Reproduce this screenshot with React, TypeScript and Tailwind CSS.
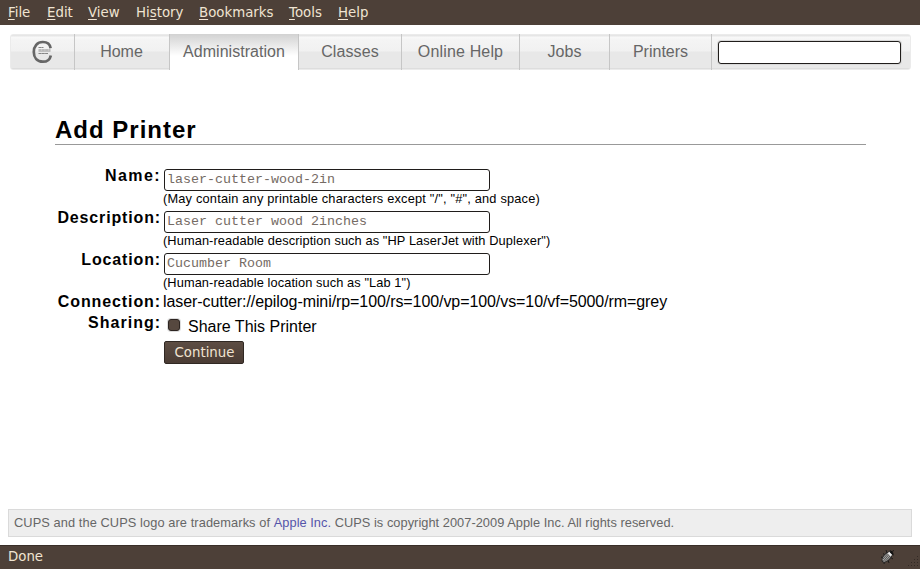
import type { ReactNode } from "react";

const sans = "font-['Liberation_Sans',Arial,sans-serif]";
const ui = "font-['DejaVu_Sans',sans-serif]";

const menus = [
  { label: "File", gap: "w-[39px]" },
  { label: "Edit", gap: "w-[41px]" },
  { label: "View", gap: "w-[48px]" },
  { label: "History", gap: "w-[63px]", key: 2 },
  { label: "Bookmarks", gap: "w-[90px]" },
  { label: "Tools", gap: "w-[49px]" },
  { label: "Help", gap: "" },
];

const tabs = [
  { label: "Home", width: "w-[95px]", text: "-ml-px" },
  { label: "Administration", width: "w-[129px]", text: "tracking-[0.04px]", active: true },
  { label: "Classes", width: "w-[103px]", text: "tracking-[0.12px]" },
  { label: "Online Help", width: "w-[118px]", text: "tracking-[0.16px]" },
  { label: "Jobs", width: "w-[90px]", text: "" },
  { label: "Printers", width: "w-[102px]", text: "" },
];

function MenuBar() {
  return (
    <header className={`flex h-[25px] bg-[#4d4038] pl-2 text-[13.33px] leading-[25px] text-[#f0e4d2] ${ui}`}>
      {menus.map(({ label, gap, key = 0 }) => (
        <span key={label} className={gap}>
          {label.slice(0, key)}
          <span className="underline decoration-1 underline-offset-2">{label[key]}</span>
          {label.slice(key + 1)}
        </span>
      ))}
    </header>
  );
}

function CupsLogo() {
  return (
    <svg width="21" height="24" viewBox="0 0 21 24" fill="none">
      <path d="M18.6 8.2C18 4 14.7 2 10.8 2C5.2 2 1.8 6.2 1.8 12C1.8 17.8 5.2 21.7 10.8 21.7C14.8 21.7 18 19.6 18.8 15.4" stroke="#666" strokeWidth="2.7" />
      <path d="M6.5 7.5H11.5M6.5 10H18.5M6.5 13.5H16" stroke="#858585" strokeWidth="1.2" strokeDasharray="3 .3" />
      <path d="M6.5 11.3H18.5" stroke="#b5b5b5" strokeWidth="1" />
    </svg>
  );
}

function NavBar() {
  return (
    <nav className="mx-[10px] mt-[9px] flex h-9 w-[901px] rounded-[3px] border border-[#ebebeb] bg-[linear-gradient(#e6e6e6_1px,#f9f9f9_2px,#f4f4f4_5px,#f1f1f1_16px,#e8e8e8_17px,#e8e8e8_33px,#d2d2d2_34px)] text-base text-[#666]">
      <div className="-my-px flex w-16 items-center justify-center border-r border-[#c6c6c6] pb-px">
        <CupsLogo />
      </div>
      {tabs.map(({ label, width, text, active }) => (
        <div
          key={label}
          className={`-my-px flex h-9 shrink-0 justify-center border-r border-[#c6c6c6] leading-[35px] ${width} ${
            active ? "bg-[linear-gradient(#d2d2d2,#fff_22px)]" : ""
          }`}
        >
          <span className={text}>{label}</span>
        </div>
      ))}
      <input className="ml-[6px] mt-[6px] h-[23px] w-[183px] rounded-[3px] border border-[#201d1b] bg-white px-1 text-sm shadow-[0_0_0_1px_#d9d9d9] outline-none" />
    </nav>
  );
}

function Row({ label, height, tracking = "tracking-[0.85px]", children }: { label: string; height: string; tracking?: string; children?: ReactNode }) {
  return (
    <div className={`flex ${height}`}>
      <div className={`w-[106px] shrink-0 text-right text-base font-bold leading-[18px] ${tracking}`}>{label}</div>
      <div className="ml-[2px] grow whitespace-nowrap">{children}</div>
    </div>
  );
}

function Field({ value, hint, tracking }: { value: string; hint: string; tracking: string }) {
  return (
    <>
      <input
        defaultValue={value}
        className="ml-px mt-[2px] block h-[22px] w-[326px] rounded-[3px] border border-[#201d1b] bg-white px-[2px] pb-[2px] font-['Liberation_Mono',monospace] text-[13.33px] text-[#756b64] outline-none"
      />
      <div className={`text-[12.8px] leading-4 ${tracking}`}>{hint}</div>
    </>
  );
}

function Beetle() {
  return (
    <svg width="16" height="16" viewBox="0 0 16 16" fill="none">
      <path d="M3 4.5L5 6M6 1L7 4M1 8L4 9M4 15L4.500 12M9 14L8 11M13 10L10 8M10 1L11 3L14 1.500M14 6L11 5" stroke="#1d1a18" />
      <ellipse cx="7" cy="8" rx="3.300" ry="6.300" transform="rotate(43 7 8)" fill="#a5a4a1" stroke="#252525" />
      <path d="M3.500 12L9 5.500M5.500 12L10 7M3 10L7.500 5" stroke="#494949" strokeWidth=".9" />
      <path d="M8.500 3.500L11.500 6.500" stroke="#efefef" strokeWidth="2" />
      <path d="M10.500 2.500L13 5" stroke="#111" strokeWidth="2" />
    </svg>
  );
}

export default function App() {
  return (
    <div className={`flex h-[569px] w-[920px] flex-col overflow-hidden bg-white text-black ${sans}`}>
      <MenuBar />
      <NavBar />
      <main className="ml-[55px] mt-[45px] w-[811px] grow">
        <h1 className="h-[30px] border-b border-[#999] text-2xl font-bold leading-[29px] tracking-[1px]">Add Printer</h1>
        <form className="mt-[22px]">
          <Row label="Name:" height="h-[42px]" tracking="tracking-[1.4px]">
            <Field tracking="tracking-[0.19px]" value="laser-cutter-wood-2in" hint={'(May contain any printable characters except "/", "#", and space)'} />
          </Row>
          <Row label="Description:" height="h-[42px]">
            <Field tracking="tracking-[0.1px]" value="Laser cutter wood 2inches" hint={'(Human-readable description such as "HP LaserJet with Duplexer")'} />
          </Row>
          <Row label="Location:" height="h-[42px]">
            <Field tracking="tracking-[0.09px]" value="Cucumber Room" hint={'(Human-readable location such as "Lab 1")'} />
          </Row>
          <Row label="Connection:" height="h-[21px]" tracking="tracking-[0.9px]">
            <div className="text-base leading-[18px] tracking-[-0.08px]">laser-cutter://epilog-mini/rp=100/rs=100/vp=100/vs=10/vf=5000/rm=grey</div>
          </Row>
          <Row label="Sharing:" height="h-[27px]" tracking="tracking-[1px]">
            <label className="flex items-start pl-[5px] pt-[3px] text-base leading-5">
              <span className="mr-2 mt-[2px] h-3 w-3 rounded-[3px] border border-[#2d2521] bg-[#56483f] shadow-[0_0_0_1px_#ddd]" />
              Share This Printer
            </label>
          </Row>
          <button type="button" className={`ml-[109px] block h-[23px] w-20 rounded-[2px] border border-[#302823] bg-linear-to-b from-[#5d4d43] to-[#4a3c34] pl-px text-[13.33px] leading-5 text-[#f0e4d2] ${ui}`}>
            Continue
          </button>
        </form>
      </main>
      <footer className="mx-2 mb-2 h-7 shrink-0 border border-[#dadada] bg-[#eee] pl-[5px] text-[12.8px] leading-[26px] tracking-[0.04px] text-[#666]">
        <span className="tracking-[0.09px]">CUPS and the CUPS logo are trademarks of </span>
        <a className="text-[#5555aa]">Apple Inc.</a> CUPS is copyright 2007-2009 Apple Inc. All rights reserved.
      </footer>
      <div className={`flex h-6 shrink-0 justify-between border-t border-[#382e28] bg-[#4d4038] pl-2 text-[13.33px] leading-[22px] text-[#f0e4d2] ${ui}`}>
        Done
        <div className="mt-[3px] flex">
          <Beetle />
          <svg className="ml-[12px]" width="12" height="18" fill="#332a25">
            <path d="M9 7h1v1h-1zM6 10h1v1h-1zM9 10h1v1h-1zM3 13h1v1h-1zM6 13h1v1h-1zM9 13h1v1h-1zM0 16h1v1h-1zM3 16h1v1h-1zM6 16h1v1h-1zM9 16h1v1h-1z" />
          </svg>
        </div>
      </div>
    </div>
  );
}
